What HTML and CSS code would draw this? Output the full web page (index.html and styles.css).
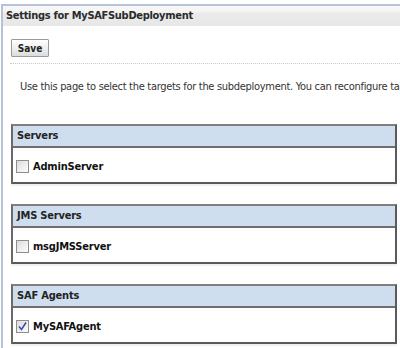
FILE: index.html
```html
<!DOCTYPE html>
<html>
<head>
<meta charset="utf-8">
<link rel="stylesheet" href="styles.css">
</head>
<body>
<div class="page">
  <div class="title">Settings for MySAFSubDeployment</div>
  <div class="toolbar"><button class="btn">Save</button></div>
  <p class="desc">Use this page to select the targets for the subdeployment. You can reconfigure targets at any time.</p>
  <div class="group">
    <div class="ghead">Servers</div>
    <div class="grow"><span class="cb"></span><span class="lbl">AdminServer</span></div>
  </div>
  <div class="group">
    <div class="ghead">JMS Servers</div>
    <div class="grow"><span class="cb"></span><span class="lbl">msgJMSServer</span></div>
  </div>
  <div class="group">
    <div class="ghead">SAF Agents</div>
    <div class="grow"><span class="cb checked"><svg width="11" height="11" viewBox="0 0 11 11"><path d="M2 5.5 L4.5 8.5 L9 1.5" fill="none" stroke="#3a4fb0" stroke-width="1.6"/></svg></span><span class="lbl">MySAFAgent</span></div>
  </div>
</div>
</body>
</html>
```
FILE: styles.css
```css
html, body { margin: 0; padding: 0; background: #fff; overflow: hidden; }
body { font-family: "DejaVu Sans Condensed", "DejaVu Sans", Verdana, sans-serif; font-stretch: condensed; font-size: 11px; color: #333; }
.page {
  margin: 4px 0 0 1px;
  border-left: 2px solid #b5c3d5;
  border-top: 2px solid #b5c3d5;
  height: 342px;
  overflow: hidden;
}
.title {
  height: 20px;
  line-height: 20px;
  padding-left: 3px;
  font-weight: bold;
  letter-spacing: -0.3px;
  color: #2b2b2b;
  background: linear-gradient(#f8f8f8 0%, #f3f3f3 30%, #eaeaea 35%, #e8e8e8 100%);
}
.toolbar {
  margin-left: 7px;
  padding: 13px 0 6px 1px;
  border-bottom: 1px dotted #c8c8c8;
}
.btn {
  display: block;
  width: 38px;
  height: 18px;
  padding: 0;
  font-family: inherit;
  font-stretch: condensed;
  font-size: 10px;
  font-weight: bold;
  color: #222;
  border: 1px solid #9a9a9a;
  border-radius: 1px;
  background: linear-gradient(#ffffff, #ececec 60%, #dcdcdc);
}
.desc {
  margin: 16px 0 30px 17px;
  white-space: nowrap;
  line-height: 14px;
  letter-spacing: -0.3px;
  color: #333;
}
.group {
  margin: 0 0 20px 8px;
  width: 382px;
  border: 2px solid #5a5a5a;
  border-top-color: #808080;
  border-left-color: #6a6a6a;
  box-shadow: 0 2px 0 #f0f0f0;
}
.ghead {
  height: 20px;
  line-height: 20px;
  padding-left: 4px;
  font-weight: bold;
  letter-spacing: -0.2px;
  color: #222;
  background: #cfdeee;
  border-bottom: 2px solid #6f6f6f;
}
.grow {
  height: 34px;
  display: flex;
  align-items: center;
  padding-left: 3px;
  padding-top: 2px;
  box-sizing: border-box;
}
.cb {
  width: 11px;
  height: 11px;
  border: 1px solid #8e8e8e;
  background: linear-gradient(135deg, #dcdcdc, #fdfdfd);
  margin-right: 4px;
  display: inline-flex;
}
.lbl { font-weight: bold; color: #111; font-size: 11px; letter-spacing: -0.2px; }
```
